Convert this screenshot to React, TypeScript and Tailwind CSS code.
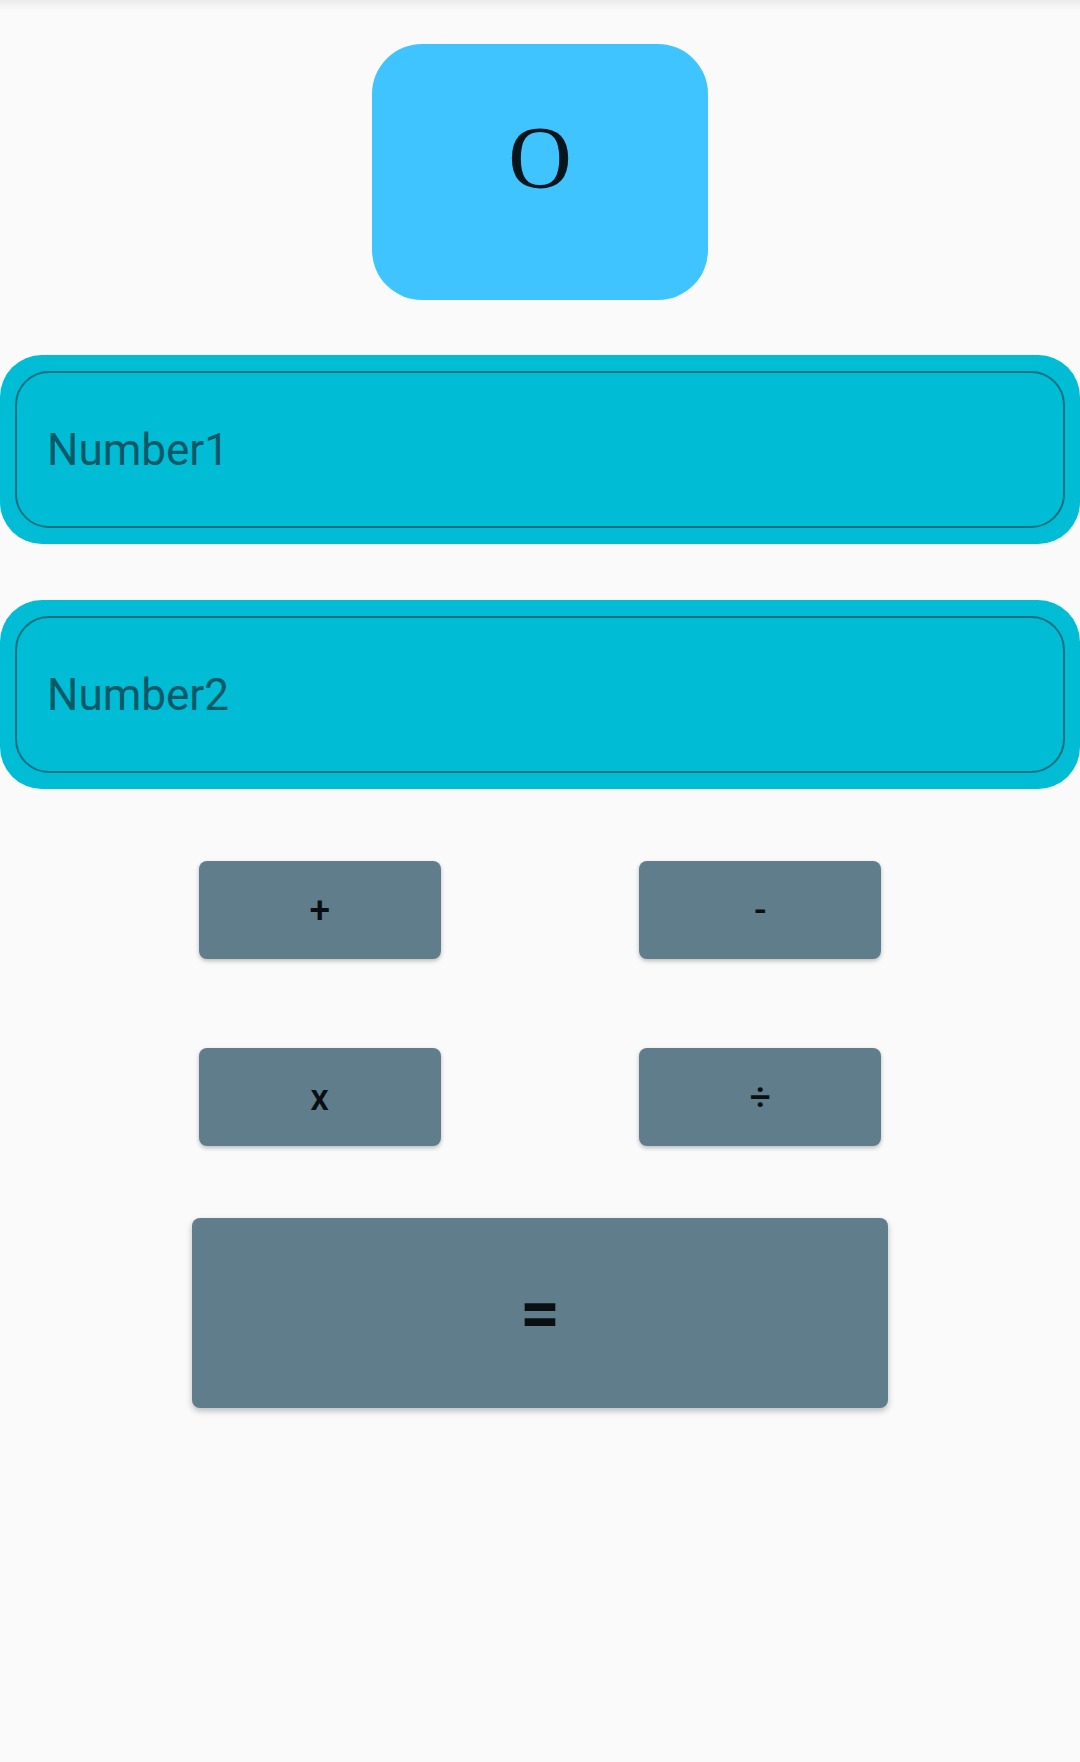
import React from "react";

function OpButton({ label }: { label: string }) {
  return (
    <div className="w-[242px] h-[98px] rounded-[8px] bg-[#607d8b] shadow-[0_2px_4px_rgba(0,0,0,0.25)] flex items-center justify-center text-[37px] font-medium text-[#0a0f12] font-['Roboto',sans-serif] leading-none">
      {label}
    </div>
  );
}

function Field({ label }: { label: string }) {
  return (
    <div className="w-full h-[189px] rounded-[42px] bg-[#00bcd4] px-[15px] py-[16px]">
      <div className="h-full rounded-[34px] border-2 border-[#146f7f] flex items-center pl-[30px]">
        <span className="font-['Roboto',sans-serif] text-[44px] text-[#0b5866] leading-none">{label}</span>
      </div>
    </div>
  );
}

export default function App() {
  return (
    <div className="min-h-[1762px] w-[1080px] bg-[#fafafa] flex flex-col">
      <div className="h-[10px] bg-gradient-to-b from-[#ebebeb] to-[#fafafa]" />
      <div className="mt-[34px] mx-auto w-[336px] h-[256px] rounded-[50px] bg-[#40c4ff] flex flex-col items-center pt-[70px]">
        <span className="font-['Liberation_Serif',serif] text-[88px] leading-none text-[#07151c]">O</span>
      </div>
      <div className="mt-[55px]">
        <Field label="Number1" />
      </div>
      <div className="mt-[56px]">
        <Field label="Number2" />
      </div>
      <div className="mt-[72px] flex justify-evenly">
        <OpButton label="+" />
        <OpButton label="-" />
      </div>
      <div className="mt-[89px] flex justify-evenly">
        <OpButton label="x" />
        <OpButton label="÷" />
      </div>
      <div className="mt-[72px] mx-auto w-[696px] h-[190px] rounded-[8px] bg-[#607d8b] shadow-[0_3px_6px_rgba(0,0,0,0.25)] flex items-center justify-center font-['Roboto',sans-serif] text-[70px] font-bold text-[#0a0f12] leading-none">
        =
      </div>
    </div>
  );
}
